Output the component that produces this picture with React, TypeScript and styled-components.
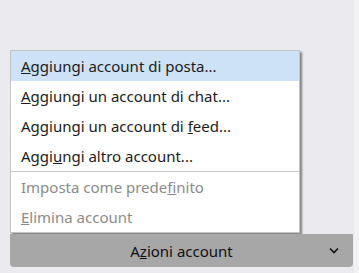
import React from 'react';
import styled, { createGlobalStyle } from 'styled-components';

const GlobalStyle = createGlobalStyle`
  html, body {
    margin: 0;
    padding: 0;
    background: #ebeaef;
    font-family: 'Noto Sans', 'Liberation Sans', sans-serif;
  }
`;

const Page = styled.div`
  width: 359px;
  height: 273px;
  box-sizing: border-box;
  padding: 234px 6px 0 10px;
  background: linear-gradient(to right, #ebeaef 354px, #f1f1f4 354px);
  overflow: hidden;
`;

const Anchor = styled.div`
  position: relative;
`;

// popup sits just above the button
const Menu = styled.div`
  position: absolute;
  left: 0;
  bottom: calc(100% + 1px);
  width: 290px;
  box-sizing: border-box;
  background: #fff;
  border: 1px solid #c4c4c4;
  box-shadow: 2px 2px 2px rgba(0, 0, 0, 0.45);
  display: flex;
  flex-direction: column;
`;

const Item = styled.div<{ $active?: boolean; $disabled?: boolean }>`
  height: 30px;
  display: flex;
  align-items: center;
  padding-left: 10px;
  font-size: 15px;
  color: ${(p) => (p.$disabled ? '#8c8c8c' : '#1c1c1c')};
  background: ${(p) => (p.$active ? '#cde1f7' : 'transparent')};
  white-space: nowrap;

  u {
    text-decoration-thickness: 1px;
    text-underline-offset: 1px;
  }
`;

const Separator = styled.div`
  height: 1px;
  background: #c8c8c8;
`;

const Button = styled.div`
  height: 33px;
  background: #a7a7a7;
  border-radius: 0 0 4px 4px;
  display: flex;
  align-items: center;
  justify-content: center;
  position: relative;
  font-size: 15px;
  color: #111;

  u {
    text-decoration-thickness: 1px;
    text-underline-offset: 1px;
  }
`;

const Chevron = styled.svg`
  position: absolute;
  right: 14px;
  top: 13px;
`;

export default function App() {
  return (
    <>
      <GlobalStyle />
      <Page>
        <Anchor>
          <Menu>
            <Item $active>
              <span><u>A</u>ggiungi account di posta...</span>
            </Item>
            <Item>
              <span><u>A</u>ggiungi un account di chat...</span>
            </Item>
            <Item>
              <span>Aggiungi un account di <u>f</u>eed...</span>
            </Item>
            <Item>
              <span>Aggi<u>u</u>ngi altro account...</span>
            </Item>
            <Separator />
            <Item $disabled>
              <span>Imposta come prede<u>f</u>inito</span>
            </Item>
            <Item $disabled>
              <span><u>E</u>limina account</span>
            </Item>
          </Menu>
          <Button>
            <span>A<u>z</u>ioni account</span>
            <Chevron width="10" height="7" viewBox="0 0 10 7">
              <path d="M1 1.5 L5 5.5 L9 1.5" fill="none" stroke="#111" strokeWidth="1.6" />
            </Chevron>
          </Button>
        </Anchor>
      </Page>
    </>
  );
}
